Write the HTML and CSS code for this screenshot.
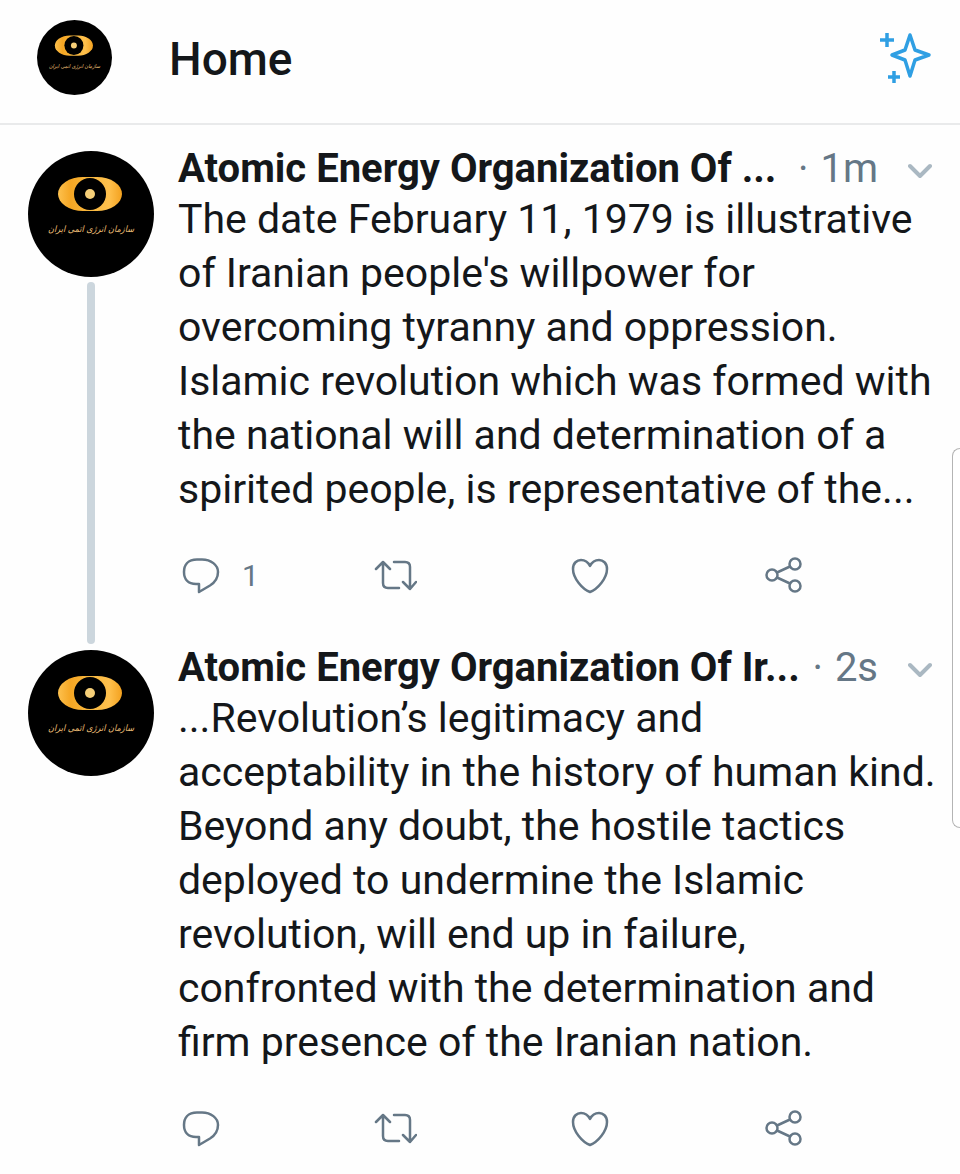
FILE: index.html
```html
<!DOCTYPE html>
<html lang="en">
<head>
    <meta charset="utf-8">
    <meta name="viewport" content="width=device-width, initial-scale=1">
    <title>Home</title>
    <link rel="stylesheet" href="styles.css">
</head>
<body>
    <!-- shared icons -->
    <svg class="sprite" aria-hidden="true">
        <linearGradient id="gold">
            <stop offset="0" stop-color="#fdc14e"/>
            <stop offset="0.2" stop-color="#f5a623"/>
            <stop offset="0.5" stop-color="#f8b840"/>
            <stop offset="0.8" stop-color="#ffc04c"/>
            <stop offset="1" stop-color="#f3a11f"/>
        </linearGradient>
        <symbol id="logo" viewBox="0 0 126 126">
            <rect width="126" height="126" fill="#000"/>
            <rect x="30" y="26" width="64" height="34" rx="25" ry="17" fill="url(#gold)"/>
            <circle cx="62" cy="43" r="16" fill="#000"/>
            <circle cx="62" cy="43" r="5" fill="#f6cf78"/>
            <text class="logo-text" x="63" y="81" text-anchor="middle">سازمان انرژی اتمی ایران</text>
        </symbol>
        <symbol id="reply" viewBox="0 0 44 40">
            <path d="M19 4.500H24C33 4.500 40 10 40 17C40 24 36 28 32 30.500L21 37V29H18C10 29 6 24 6 17C6 10 10 4.500 19 4.500Z"/>
        </symbol>
        <symbol id="retweet" viewBox="0 0 44 40">
            <path d="M3 14L10 7L17 14M10 7V28Q10 33 15 33H26M21 7H32Q37 7 37 12V34M30 27L37 34L43 27"/>
        </symbol>
        <symbol id="like" viewBox="0 0 44 40">
            <path d="M23 37C15 34 6 23 6 14C6 8 10 5 14 5C18 5 21 7 23 11C25 7 28 5 32 5C36 5 40 8 40 14C40 23 31 34 23 37Z"/>
        </symbol>
        <symbol id="share" viewBox="0 0 44 40">
            <circle cx="10" cy="20" r="5.500"/>
            <circle cx="33" cy="9" r="5.500"/>
            <circle cx="33" cy="31" r="5.500"/>
            <path d="M15 17.500L28 11.500M15 22.500L28 28.500"/>
        </symbol>
        <symbol id="chevron" viewBox="0 0 24 16">
            <path d="M2 3L12 13L22 3"/>
        </symbol>
    </svg>

    <header class="topbar">
        <svg class="topbar-avatar" role="img" aria-label="Account"><use href="#logo"/></svg>
        <h1>Home</h1>
        <button class="sparkle" aria-label="Top Tweets">
            <svg viewBox="0 0 56 56">
                <path d="M34 5L39 20L53 25L39 30L34 46L29 30L16 25L29 20Z"/>
                <path d="M11 3V17M4 10H18M18 41V53M12 47H24"/>
            </svg>
        </button>
    </header>

    <main class="timeline">
        <article class="tweet">
            <div class="side">
                <svg class="avatar" role="img" aria-label="Atomic Energy Organization Of Iran"><use href="#logo"/></svg>
                <div class="thread"></div>
            </div>
            <div class="content">
                <div class="tweet-head">
                    <h2>Atomic Energy Organization Of ...</h2>
                    <span class="dot">·</span>
                    <span class="time">1m</span>
                    <button class="more" aria-label="More"><svg><use href="#chevron"/></svg></button>
                </div>
                <p>The date February 11, 1979 is illustrative of Iranian people's willpower for overcoming tyranny and oppression. Islamic revolution which was formed with the national will and determination of a spirited people, is representative of the...</p>
                <div class="actions">
                    <button aria-label="Reply"><svg><use href="#reply"/></svg><span>1</span></button>
                    <button aria-label="Retweet"><svg><use href="#retweet"/></svg></button>
                    <button aria-label="Like"><svg><use href="#like"/></svg></button>
                    <button aria-label="Share"><svg><use href="#share"/></svg></button>
                </div>
            </div>
        </article>

        <article class="tweet">
            <div class="side">
                <svg class="avatar" role="img" aria-label="Atomic Energy Organization Of Iran"><use href="#logo"/></svg>
            </div>
            <div class="content">
                <div class="tweet-head">
                    <h2>Atomic Energy Organization Of Ir...</h2>
                    <span class="dot">·</span>
                    <span class="time">2s</span>
                    <button class="more" aria-label="More"><svg><use href="#chevron"/></svg></button>
                </div>
                <p>...Revolution’s legitimacy and acceptability in the history of human kind. Beyond any doubt, the hostile tactics deployed to undermine the Islamic revolution, will end up in failure, confronted with the determination and firm presence of the Iranian nation.</p>
                <div class="actions">
                    <button aria-label="Reply"><svg><use href="#reply"/></svg></button>
                    <button aria-label="Retweet"><svg><use href="#retweet"/></svg></button>
                    <button aria-label="Like"><svg><use href="#like"/></svg></button>
                    <button aria-label="Share"><svg><use href="#share"/></svg></button>
                </div>
            </div>
        </article>
    </main>

    <div class="edge-panel"></div>
</body>
</html>
```
FILE: styles.css
```css
* {
    box-sizing: border-box;
}

body {
    position: relative;
    margin: 0;
    background-color: #fefefe;
    color: #14171a;
    font-family: Roboto, "Liberation Sans", sans-serif;
    overflow-x: hidden;
}

h1, h2, p {
    margin: 0;
}

button {
    padding: 0;
    border: none;
    background: none;
    color: inherit;
    font-family: inherit;
    cursor: pointer;
}

svg {
    display: block;
    fill: none;
    stroke: currentColor;
    stroke-linecap: round;
    stroke-linejoin: round;
}

.sprite {
    position: absolute;
    width: 0;
    height: 0;
}

.logo-text {
    fill: #f0c07a;
    font-family: "DejaVu Sans Condensed", "DejaVu Sans", sans-serif;
    font-size: 9px;
    font-style: italic;
}

.topbar-avatar,
.avatar {
    border-radius: 50%;
    stroke: none;
}

/* top bar */
.topbar {
    display: flex;
    align-items: center;
    height: 125px;
    padding: 0 28px 8px 37px;
    border-bottom: 2px solid #e9eaeb;
}

.topbar-avatar {
    width: 75px;
    height: 75px;
}

.topbar h1 {
    flex: 1;
    margin-left: 57px;
    padding-top: 3px;
    font-size: 46px;
    font-weight: 500;
    line-height: 54px;
}

.sparkle {
    color: #2f9fe3;
}

.sparkle svg {
    width: 56px;
    height: 56px;
    stroke-width: 3.5;
    stroke-linecap: butt;
}

/* tweets */
.timeline {
    padding-top: 17px;
}

.tweet {
    display: flex;
}

.side {
    display: flex;
    flex-direction: column;
    align-items: center;
    flex: none;
    width: 178px;
    padding: 9px 24px 0 28px;
}

.avatar {
    flex: none;
    width: 126px;
    height: 126px;
}

.thread {
    flex: 1;
    width: 8px;
    margin: 5px 0 -3px;
    border-radius: 4px;
    background-color: #ccd6dd;
}

.content {
    flex: 1;
    min-width: 0;
}

.tweet-head {
    display: flex;
    align-items: center;
    height: 50px;
    padding: 3px 28px 0 0;
    font-size: 40px;
    line-height: 48px;
    white-space: nowrap;
}

.tweet-head h2 {
    font-size: 40px;
    font-weight: 700;
}

.dot {
    margin-left: auto;
    color: #657786;
}

.time {
    margin-left: 12px;
    color: #657786;
}

.more {
    margin: 4px 0 0 30px;
    color: #aab8c2;
}

.more svg {
    width: 24px;
    height: 16px;
    stroke-width: 4;
}

.content p {
    padding-right: 20px;
    font-size: 41px;
    line-height: 54px;
}

.actions {
    display: grid;
    grid-template-columns: repeat(4, 1fr);
    height: 125px;
    padding: 39px 4px 0 0;
    align-items: start;
}

.tweet:last-child .actions {
    height: 100px;
}

.actions button {
    display: flex;
    align-items: center;
    height: 40px;
    color: #657786;
    font-size: 30px;
}

.actions svg {
    width: 44px;
    height: 40px;
    stroke-width: 2.5;
}

.actions span {
    margin-left: 20px;
}

/* drawer handle peeking in from the right */
.edge-panel {
    position: absolute;
    top: 448px;
    right: 0;
    width: 8px;
    height: 380px;
    border: 1px solid #b4b4b4;
    border-right: none;
    border-radius: 10px 0 0 10px;
    background-color: #fff;
}
```
